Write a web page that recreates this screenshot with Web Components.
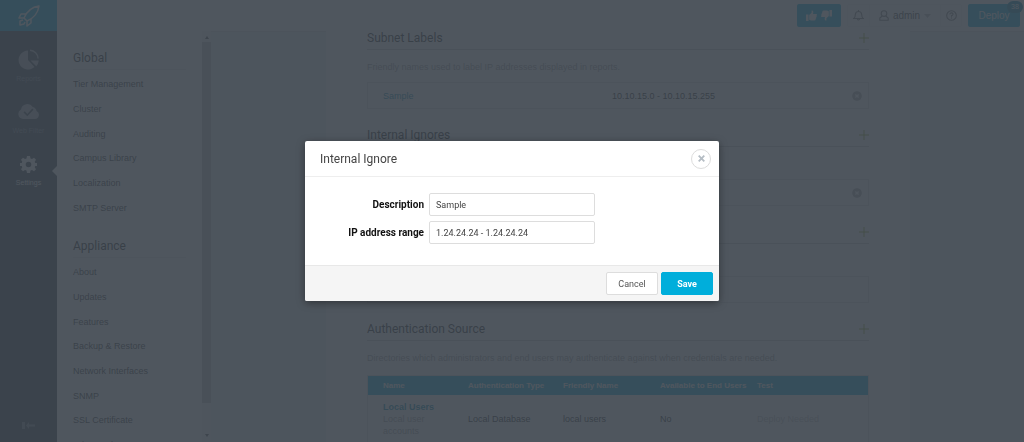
<!DOCTYPE html>
<html lang="en">
<head>
<meta charset="utf-8">
<title>Settings</title>
<style>
  html, body {
    height: 100%;
    margin: 0;
    overflow: hidden;
  }

  body {
    font-family: "Liberation Sans", Arial, sans-serif;
    font-size: 9px;
    line-height: 12px;
    color: #222;
    background: #eceef0;
  }
</style>
</head>
<body>
<app-shell>
  <top-bar slot="top"></top-bar>
  <side-rail slot="rail"></side-rail>
  <settings-menu slot="menu"></settings-menu>
  <settings-section heading="Subnet Labels" note="Friendly names used to label IP addresses displayed in reports.">
    <range-row name="Sample" range="10.10.15.0 - 10.10.15.255"></range-row>
  </settings-section>
  <settings-section heading="Internal Ignores">
    <range-row></range-row>
  </settings-section>
  <settings-section>
    <range-row empty></range-row>
  </settings-section>
  <settings-section heading="Authentication Source" note="Directories which administrators and end users may authenticate against when credentials are needed.">
    <auth-table></auth-table>
  </settings-section>
</app-shell>
<modal-dialog heading="Internal Ignore">
  <form-field label="Description" value="Sample"></form-field>
  <form-field label="IP address range" value="1.24.24.24 - 1.24.24.24"></form-field>
  <action-button slot="footer">Cancel</action-button>
  <action-button slot="footer" primary>Save</action-button>
</modal-dialog>

<script>
class AppShell extends HTMLElement {
  constructor() {
    super();
    this.attachShadow({ mode: 'open' });
  }

  connectedCallback() {
    this.shadowRoot.innerHTML = `
      <style>
        :host {
          display: grid;
          grid-template: 31px minmax(0, 1fr) / 57px 154px minmax(0, 1fr);
          grid-template-areas: "top top top" "rail menu main";
          height: 100vh;
        }

        slot[name="top"] { display: block; grid-area: top; }
        slot[name="rail"] { display: grid; grid-area: rail; }
        slot[name="menu"] { display: grid; grid-area: menu; min-height: 0; }

        main {
          grid-area: main;
          overflow: hidden;
          padding: 0 114px 0 115px;
          box-sizing: border-box;
        }

        .page {
          min-height: 100%;
          padding: 0 41px;
          background: #fff;
          box-sizing: border-box;
        }
      </style>
      <slot name="top"></slot>
      <slot name="rail"></slot>
      <slot name="menu"></slot>
      <main><div class="page"><slot></slot></div></main>
    `;
  }
}
customElements.define('app-shell', AppShell);

class TopBar extends HTMLElement {
  constructor() {
    super();
    this.attachShadow({ mode: 'open' });
  }

  connectedCallback() {
    this.shadowRoot.innerHTML = `
      <style>
        :host {
          display: flex;
          align-items: center;
          height: 31px;
          background: #fff;
          box-shadow: 0 1px 0 #ddd;
        }

        .logo {
          display: grid;
          place-items: center;
          width: 57px;
          height: 31px;
          margin-right: auto;
          background: #00aedb;
        }

        button {
          display: flex;
          align-items: center;
          justify-content: center;
          height: 23px;
          padding: 0;
          border: 0;
          font: inherit;
          color: #666;
          background: none;
        }

        .solid {
          position: relative;
          border-radius: 2px;
          color: #fff;
          background: #00aedb;
        }

        .vote { width: 44px; gap: 4px; }
        .deploy { width: 52px; margin-right: 4px; font-size: 10px; }

        .group {
          display: flex;
          margin: 0 6px;
          border: 1px solid #eee;
          border-radius: 2px;
          box-sizing: border-box;
        }

        .group button { width: 21px; height: 21px; }
        .group button + button { border-left: 1px solid #eee; }
        .group .user { width: 71px; gap: 4px; font-size: 10px; color: #444; }

        .badge {
          position: absolute;
          top: -3px;
          right: -3px;
          width: 16px;
          height: 12px;
          border-radius: 6px;
          font-size: 7px;
          line-height: 12px;
          background: #0087ab;
        }
      </style>
      <a class="logo" href="#" aria-label="Dashboard">
        <svg width="22" height="22" viewBox="0 0 22 22" fill="none" stroke="#fff" stroke-width="1.5" stroke-linejoin="round">
          <path d="M21 1 C14 2 9 6 6 13 L9 16 C16 13 20 8 21 1Z M8 9 L3 9 L1 13 L6 13 M13 14 L13 18 L9 21 L9 16 M5 15 L2 16 L2 20 L6 19 L7 17"/>
        </svg>
      </a>
      <button class="solid vote" aria-label="Feedback">
        <svg width="11" height="11" viewBox="0 0 11 11" fill="#fff">
          <path d="M0 4.5H2.5V11H0ZM3.2 5 L5.6 2.8 V0.5 Q7.5 0 7.3 2.5 L7 4H10.5Q11.2 4.6 10.6 5.5Q11 6.6 10.2 7.3Q10.4 8.3 9.6 8.8Q9.8 10.3 8.4 10.4H5L3.2 9.8Z"/>
        </svg>
        <svg width="11" height="11" viewBox="0 0 11 11" fill="#fff">
          <path transform="rotate(180 5.5 5.5)" d="M0 4.5H2.5V11H0ZM3.2 5 L5.6 2.8 V0.5 Q7.5 0 7.3 2.5 L7 4H10.5Q11.2 4.6 10.6 5.5Q11 6.6 10.2 7.3Q10.4 8.3 9.6 8.8Q9.8 10.3 8.4 10.4H5L3.2 9.8Z"/>
        </svg>
      </button>
      <div class="group">
        <button aria-label="Notifications">
          <svg width="11" height="11" viewBox="0 0 11 11" fill="none" stroke="#777" stroke-width="1.1">
            <path d="M0.8 8.5 Q2.3 7.5 2.3 4.5 Q2.5 1.5 5.5 1.5 Q8.5 1.5 8.7 4.5 Q8.7 7.5 10.2 8.5Z M4.3 9 Q5.5 11 6.7 9 M5.5 0V1.5"/>
          </svg>
        </button>
        <button class="user">
          <svg width="10" height="11" viewBox="0 0 10 11" fill="none" stroke="#777" stroke-width="1.1">
            <circle cx="5" cy="3.6" r="2.8"/>
            <path d="M3.2 6 L0.8 8V10.2H9.2V8L6.8 6"/>
          </svg>
          admin
          <svg width="7" height="4" viewBox="0 0 7 4" fill="#bbb"><path d="M0 0H7L3.5 4Z"/></svg>
        </button>
        <button aria-label="Help">
          <svg width="11" height="11" viewBox="0 0 11 11" fill="none" stroke="#777" stroke-width="1.1">
            <circle cx="5.5" cy="5.5" r="4.8"/>
            <path d="M3.8 4.4 Q4 2.8 5.6 2.8 Q7.2 3 7 4.4 Q6.8 5.2 5.5 5.8V6.7 M5.5 7.4V8.5"/>
          </svg>
        </button>
      </div>
      <button class="solid deploy">Deploy<span class="badge">38</span></button>
    `;
  }
}
customElements.define('top-bar', TopBar);

class SideRail extends HTMLElement {
  constructor() {
    super();
    this.attachShadow({ mode: 'open' });

    this.items = [
      { label: 'Reports', icon: '<path d="M10 1.5A9.5 9.5 0 1 0 16.5 18L10 11Z"/><path d="M12 0.5A9.5 9.5 0 0 1 20.8 9.5H19.4A8 8 0 0 0 12 2Z M12.5 11.5H20.8A9 9 0 0 1 18.2 17.2Z"/>' },
      { label: 'Web Filter', icon: '<path fill-rule="evenodd" d="M5 18A5 5 0 0 1 3 8.6A6.5 6.5 0 0 1 14.8 6A5 5 0 0 1 18.5 10A4.2 4.2 0 0 1 17 18Z M5.5 11.5L9.3 15.3L15.5 8.8L14.3 7.6L9.3 12.9L6.8 10.3Z"/>' },
      { label: 'Settings', active: true, icon: '<path fill-rule="evenodd" d="M9 3H12L12.5 5.4L14 6L16 4.7L18 6.8L16.7 8.7L17.2 10H19V13H17.2L16.7 14.3L18 16.3L16 18.3L14 17L12.5 17.6L12 20H9L8.5 17.6L7 17L5 18.3L3 16.3L4.3 14.3L3.8 13H2V10H3.8L4.3 8.7L3 6.8L5 4.7L7 6L8.5 5.4Z M10.5 8.7A2.8 2.8 0 1 0 10.5 14.3A2.8 2.8 0 1 0 10.5 8.7Z"/>' }
    ];
  }

  connectedCallback() {
    const links = this.items
      .map(item => `
        <a href="#" class="${item.active ? 'active' : ''}">
          <svg width="21" height="21" viewBox="0 0 21 21" fill="currentColor">${item.icon}</svg>
          <span>${item.label}</span>
        </a>`)
      .join('');

    this.shadowRoot.innerHTML = `
      <style>
        :host {
          display: flex;
          flex-direction: column;
          justify-content: space-between;
          background: #363f4a;
        }

        nav { padding-top: 14px; }

        a {
          position: relative;
          display: flex;
          flex-direction: column;
          align-items: center;
          gap: 4px;
          height: 52px;
          box-sizing: border-box;
          padding-top: 4px;
          font-size: 7px;
          line-height: 10px;
          text-decoration: none;
          color: #7f8993;
        }

        svg { flex: none; }
        a svg { color: #aab0b7; }
        a.active, a.active svg { color: #fff; }

        .active::after {
          content: "";
          position: absolute;
          right: 0;
          top: 17px;
          border: 5px solid transparent;
          border-left: 0;
          border-right-color: #fff;
        }

        button {
          padding: 0 0 10px;
          border: 0;
          background: none;
        }
      </style>
      <nav>${links}</nav>
      <button aria-label="Collapse">
        <svg width="13" height="7" viewBox="0 0 13 7" fill="#7f8993"><path d="M0 0H3V7H0Z M4 3.5L7 0V2.5H13V4.5H7V7Z"/></svg>
      </button>
    `;
  }
}
customElements.define('side-rail', SideRail);

class SettingsMenu extends HTMLElement {
  constructor() {
    super();
    this.attachShadow({ mode: 'open' });

    this.groups = [
      { title: 'Global', links: ['Tier Management', 'Cluster', 'Auditing', 'Campus Library', 'Localization', 'SMTP Server'] },
      { title: 'Appliance', links: ['About', 'Updates', 'Features', 'Backup &amp; Restore', 'Network Interfaces', 'SNMP', 'SSL Certificate', 'Advanced'] }
    ];
  }

  connectedCallback() {
    const groups = this.groups
      .map(group => `
        <h2>${group.title}</h2>
        <ul>
          ${group.links.map(link => `<li><a href="#">${link}</a></li>`).join('')}
        </ul>`)
      .join('');

    this.shadowRoot.innerHTML = `
      <style>
        :host {
          display: flex;
          min-height: 0;
          overflow: hidden;
          background: #fff;
        }

        nav {
          flex: 1;
          padding: 17px 16px 0;
        }

        h2 {
          margin: 0;
          padding-bottom: 1px;
          border-bottom: 1px solid #e6e6e6;
          font: 400 12px/20px Roboto, sans-serif;
          color: #222;
        }

        ul {
          margin: 0 0 16px;
          padding: 2px 0 0;
          list-style: none;
        }

        li { line-height: 25px; }
        li:nth-child(3n) { line-height: 24px; }

        a {
          color: #333;
          text-decoration: none;
        }

        .scroll {
          display: flex;
          flex-direction: column;
          align-items: center;
          gap: 3px;
          width: 9px;
          padding: 5px 0;
          box-sizing: border-box;
          background: #f1f1f1;
        }

        .thumb {
          flex: 1;
          width: 9px;
          margin-bottom: 28px;
          background: #c1c1c1;
        }
      </style>
      <nav>${groups}</nav>
      <div class="scroll">
        <svg width="4" height="3" viewBox="0 0 4 3" fill="#505050"><path d="M0 3H4L2 0Z"/></svg>
        <div class="thumb"></div>
        <svg width="4" height="3" viewBox="0 0 4 3" fill="#505050"><path d="M0 0H4L2 3Z"/></svg>
      </div>
    `;
  }
}
customElements.define('settings-menu', SettingsMenu);

class SettingsSection extends HTMLElement {
  constructor() {
    super();
    this.attachShadow({ mode: 'open' });
  }

  connectedCallback() {
    this.shadowRoot.innerHTML = `
      <style>
        :host {
          display: block;
          padding-bottom: 9px;
        }

        header {
          display: flex;
          align-items: center;
          justify-content: space-between;
          height: 14px;
          padding-bottom: 4px;
          border-bottom: 1px solid #ccc;
        }

        h2 {
          margin: 0;
          font: 400 12px/14px Roboto, sans-serif;
          color: #222;
        }

        button {
          display: flex;
          padding: 0;
          border: 0;
          background: none;
        }

        p {
          height: 12px;
          margin: 0;
          padding: 11px 0 9px;
          color: #999;
        }
      </style>
      <header>
        <h2>${this.getAttribute('heading') || ''}</h2>
        <button aria-label="Add">
          <svg width="10" height="10" viewBox="0 0 10 10" fill="#8cae2c"><path d="M4.5 0H5.5V4.5H10V5.5H5.5V10H4.5V5.5H0V4.5H4.5Z"/></svg>
        </button>
      </header>
      <p>${this.getAttribute('note') || ''}</p>
      <slot></slot>
    `;
  }
}
customElements.define('settings-section', SettingsSection);

class RangeRow extends HTMLElement {
  constructor() {
    super();
    this.attachShadow({ mode: 'open' });
  }

  connectedCallback() {
    const remove = this.hasAttribute('empty') ? '' : `
      <button aria-label="Remove">
        <svg width="10" height="10" viewBox="0 0 10 10"><circle cx="5" cy="5" r="4.8" fill="#aaa"/><path d="M3.4 3.4L6.6 6.6M6.6 3.4L3.4 6.6" stroke="#fff" stroke-width="1.4"/></svg>
      </button>`;

    this.shadowRoot.innerHTML = `
      <style>
        :host {
          display: grid;
          grid-template-columns: 229px 1fr auto;
          align-items: center;
          height: 27px;
          margin-bottom: 10px;
          padding: 0 6px 0 15px;
          border: 1px solid #e2e2e2;
          box-sizing: border-box;
        }

        a {
          color: #0087ab;
          text-decoration: none;
        }

        button {
          display: flex;
          padding: 0;
          border: 0;
          background: none;
        }
      </style>
      <a href="#">${this.getAttribute('name') || ''}</a>
      <span>${this.getAttribute('range') || ''}</span>
      ${remove}
    `;
  }
}
customElements.define('range-row', RangeRow);

class AuthTable extends HTMLElement {
  constructor() {
    super();
    this.attachShadow({ mode: 'open' });
  }

  connectedCallback() {
    this.shadowRoot.innerHTML = `
      <style>
        :host {
          display: block;
          padding-top: 2px;
        }

        table {
          width: 100%;
          table-layout: fixed;
          border-collapse: collapse;
          border: 1px solid #e2e2e2;
        }

        th, td {
          padding: 0 0 0 15px;
          text-align: left;
          white-space: nowrap;
        }

        th {
          height: 19px;
          font: 700 8px/12px "Liberation Sans", Arial, sans-serif;
          color: #fff;
          background: #00aedb;
        }

        th:nth-child(1) { width: 70px; }
        th:nth-child(2) { width: 80px; }
        th:nth-child(3), th:nth-child(4) { width: 82px; }

        td:first-child {
          padding: 6px 15px;
          white-space: normal;
          color: #999;
        }

        td:last-child { color: #bbb; }

        a {
          display: block;
          font-weight: 700;
          white-space: nowrap;
          color: #0087ab;
          text-decoration: none;
        }
      </style>
      <table>
        <thead>
          <tr><th>Name</th><th>Authentication Type</th><th>Friendly Name</th><th>Available to End Users</th><th>Test</th></tr>
        </thead>
        <tbody>
          <tr>
            <td><a href="#">Local Users</a>Local user accounts</td>
            <td>Local Database</td>
            <td>local users</td>
            <td>No</td>
            <td>Deploy Needed</td>
          </tr>
        </tbody>
      </table>
    `;
  }
}
customElements.define('auth-table', AuthTable);

class ModalDialog extends HTMLElement {
  constructor() {
    super();
    this.attachShadow({ mode: 'open' });
  }

  connectedCallback() {
    this.shadowRoot.innerHTML = `
      <style>
        :host {
          position: fixed;
          inset: 0;
          display: grid;
          place-items: center;
          background: rgba(60, 68, 77, 0.9);
        }

        section {
          width: 414px;
          max-width: 100%;
          overflow: hidden;
          border-radius: 2px;
          background: #fff;
          box-shadow: 0 2px 8px rgba(0, 0, 0, 0.4);
        }

        header {
          display: flex;
          align-items: center;
          justify-content: space-between;
          height: 35px;
          padding: 0 8px 0 15px;
          border-bottom: 1px solid #eee;
        }

        h1 {
          margin: 0;
          font: 400 12px/16px Roboto, sans-serif;
          color: #444;
        }

        .close {
          display: grid;
          place-items: center;
          width: 20px;
          height: 20px;
          padding: 0;
          border: 1px solid #ddd;
          border-radius: 50%;
          background: #fff;
        }

        .body {
          display: flex;
          flex-direction: column;
          gap: 5px;
          padding: 16px 15px 21px;
        }

        footer {
          display: flex;
          justify-content: flex-end;
          gap: 3px;
          padding: 6px;
          border-top: 1px solid #e8e8e8;
          background: #f5f5f5;
        }
      </style>
      <section role="dialog" aria-modal="true" aria-labelledby="title">
        <header>
          <h1 id="title">${this.getAttribute('heading')}</h1>
          <button class="close" aria-label="Close">
            <svg width="7" height="7" viewBox="0 0 7 7" stroke="#b5bdc4" stroke-width="1.8"><path d="M0.7 0.7L6.3 6.3M6.3 0.7L0.7 6.3"/></svg>
          </button>
        </header>
        <div class="body"><slot></slot></div>
        <footer><slot name="footer"></slot></footer>
      </section>
    `;
  }
}
customElements.define('modal-dialog', ModalDialog);

class FormField extends HTMLElement {
  constructor() {
    super();
    this.attachShadow({ mode: 'open' });
  }

  connectedCallback() {
    this.shadowRoot.innerHTML = `
      <style>
        :host {
          display: grid;
          grid-template-columns: 104px 166px;
          gap: 5px;
          align-items: center;
        }

        label {
          font: 700 10px/12px Roboto, sans-serif;
          text-align: right;
          color: #111;
        }

        input {
          height: 23px;
          padding: 0 6px;
          border: 1px solid #ddd;
          border-radius: 2px;
          box-sizing: border-box;
          font: 9px/12px Roboto, sans-serif;
          color: #444;
        }
      </style>
      <label for="field">${this.getAttribute('label')}</label>
      <input id="field" type="text" value="${this.getAttribute('value')}">
    `;
  }
}
customElements.define('form-field', FormField);

class ActionButton extends HTMLElement {
  constructor() {
    super();
    this.attachShadow({ mode: 'open' });
  }

  connectedCallback() {
    this.shadowRoot.innerHTML = `
      <style>
        :host { display: block; }

        button {
          display: block;
          width: 52px;
          height: 23px;
          padding: 0;
          border: 1px solid #ddd;
          border-radius: 2px;
          font: 400 9px/12px Roboto, sans-serif;
          color: #555;
          background: #fff;
        }

        :host([primary]) button {
          border-color: #00aedb;
          font-weight: 700;
          color: #fff;
          background: #00aedb;
        }
      </style>
      <button><slot></slot></button>
    `;
  }
}
customElements.define('action-button', ActionButton);
</script>
</body>
</html>
